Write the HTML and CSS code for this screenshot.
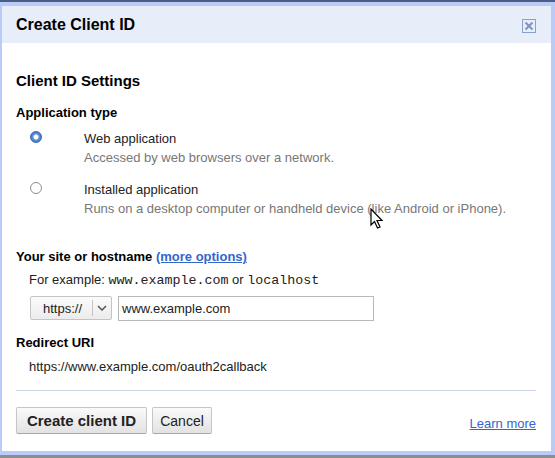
FILE: index.html
```html
<!DOCTYPE html>
<html>
<head>
<meta charset="utf-8">
<link rel="stylesheet" href="styles.css">
</head>
<body>
<div class="frame">
  <div class="dialog">
    <div class="header">
      <span class="title">Create Client ID</span>
      <span class="close" aria-label="Close">
        <svg width="14" height="14" viewBox="0 0 14 14"><rect x="0.5" y="0.5" width="13" height="13" fill="none" stroke="#8aa0c4"/><path d="M3.5 3.5 L10.5 10.5 M10.5 3.5 L3.5 10.5" stroke="#7d95bb" stroke-width="2"/></svg>
      </span>
    </div>
    <div class="content">
      <h2 class="section">Client ID Settings</h2>
      <h3 class="label">Application type</h3>
      <div class="option">
        <span class="radio checked"></span>
        <div class="opt-text">
          <div class="opt-title">Web application</div>
          <div class="opt-desc">Accessed by web browsers over a network.</div>
        </div>
      </div>
      <div class="option second">
        <span class="radio"></span>
        <div class="opt-text">
          <div class="opt-title">Installed application</div>
          <div class="opt-desc">Runs on a desktop computer or handheld device (like Android or iPhone).</div>
        </div>
      </div>
      <h3 class="label site">Your site or hostname <a class="more" href="#">(more options)</a></h3>
      <div class="example">For example: <code>www.example.com</code> or <code>localhost</code></div>
      <div class="host-row">
        <div class="select"><span class="sel-text">https://</span><span class="sel-arrow"><svg width="10" height="6" viewBox="0 0 10 6"><path d="M1 1 L5 5 L9 1" fill="none" stroke="#555" stroke-width="1.5"/></svg></span></div>
        <div class="input">www.example.com</div>
      </div>
      <h3 class="label redirect">Redirect URI</h3>
      <div class="uri">https://www.example.com/oauth2callback</div>
      <div class="rule"></div>
      <div class="actions">
        <button class="btn primary">Create client ID</button>
        <button class="btn cancel">Cancel</button>
        <a class="learn" href="#">Learn more</a>
      </div>
    </div>
  </div>
  <div class="bottom-line"></div>
  <svg class="cursor" width="14" height="22" viewBox="0 0 14 22"><path d="M1 1 L1 17 L4.5 13.5 L7.5 20 L10 19 L7 12.5 L12 12.5 Z" fill="#fff" stroke="#000" stroke-width="1.2" stroke-linejoin="miter"/></svg>
</div>
</body>
</html>
```

FILE: styles.css
```css
* { box-sizing: border-box; }
html, body { margin: 0; padding: 0; }
body {
  width: 555px;
  height: 458px;
  overflow: hidden;
  font-family: "Liberation Sans", Arial, sans-serif;
  color: #222;
  background: #fff;
}
.frame {
  position: relative;
  border-top: 2px solid #4b5d82;
}
.dialog {
  border: 4px solid #b9cbf8;
  border-left-width: 2px;
  height: 453px;
  display: flex;
  flex-direction: column;
}
.bottom-line {
  height: 3px;
  background: #8d8d8d;
}
.header {
  height: 37px;
  background: #e8eef9;
  display: flex;
  align-items: center;
  justify-content: space-between;
  padding: 0 15px 0 14px;
}
.title {
  font-size: 16px;
  font-weight: bold;
  color: #000;
}
.close {
  display: flex;
  width: 14px;
  height: 14px;
  margin-top: 2px;
}
.content {
  flex: 1;
  padding: 29px 15px 0 14px;
}
.section {
  margin: 0;
  font-size: 15px;
  line-height: 17px;
  font-weight: bold;
  color: #000;
}
.label {
  margin: 16px 0 0;
  font-size: 13px;
  line-height: 16px;
  font-weight: bold;
  color: #000;
}
.option {
  display: flex;
  margin: 9px 0 0 14px;
}
.option.second { margin-top: 15px; }
.radio {
  width: 12px;
  height: 12px;
  border-radius: 50%;
  border: 1px solid #8e8e8e;
  background: #fff;
  margin-top: 1px;
  flex: none;
}
.radio.checked {
  border-color: #3d6cb3;
  background: radial-gradient(circle, #fff 0 2px, #5b8fd6 3px 4px, #3f6eb5 5px);
}
.opt-text { margin-left: 42px; }
.opt-title {
  font-size: 13px;
  line-height: 18px;
  color: #222;
}
.opt-desc {
  font-size: 13px;
  line-height: 16px;
  margin-top: 2px;
  color: #777;
}
.label.site { margin-top: 32px; }
.more {
  color: #3366cc;
  text-decoration: underline;
}
.example {
  margin: 7px 0 0 13px;
  font-size: 13px;
  line-height: 16px;
  color: #222;
}
.example code {
  font-family: "Liberation Mono", "Courier New", monospace;
  font-size: 13.33px;
}
.host-row {
  display: flex;
  align-items: flex-start;
  gap: 6px;
  margin: 7px 0 0 14px;
}
.select {
  width: 82px;
  height: 24px;
  border: 1px solid #c4c4c4;
  border-radius: 2px;
  background: linear-gradient(#fbfbfb, #ececec);
  display: flex;
  align-items: center;
  font-size: 13px;
  color: #222;
}
.sel-text {
  flex: 1;
  padding-left: 12px;
}
.sel-arrow {
  width: 19px;
  height: 16px;
  border-left: 1px solid #c4c4c4;
  display: flex;
  align-items: center;
  justify-content: center;
}
.input {
  width: 256px;
  height: 25px;
  border: 1px solid #b9b9b9;
  padding: 0 3px;
  font-size: 13px;
  line-height: 23px;
  color: #222;
}
.label.redirect { margin-top: 14px; }
.uri {
  margin: 8px 0 0 13px;
  font-size: 13px;
  line-height: 16px;
  color: #222;
}
.rule {
  height: 1px;
  background: #ccd6ea;
  margin-top: 15px;
}
.actions {
  display: flex;
  align-items: flex-start;
  gap: 5px;
  margin-top: 16px;
}
.btn {
  height: 27px;
  padding: 0;
  font-family: "Liberation Sans", Arial, sans-serif;
  font-size: 14px;
  color: #222;
  border: 1px solid #c6c6c6;
  border-bottom-color: #a8a8a8;
  border-radius: 2px;
  background: linear-gradient(#fafafa, #e2e2e2);
}
.btn.primary {
  font-weight: bold;
  width: 131px;
  font-size: 15px;
}
.btn.cancel { width: 60px; }
.learn {
  margin-left: auto;
  margin-top: 9px;
  font-size: 13px;
  color: #3366cc;
  text-decoration: underline;
}
.cursor {
  position: absolute;
  left: 370px;
  top: 206px;
}
```
